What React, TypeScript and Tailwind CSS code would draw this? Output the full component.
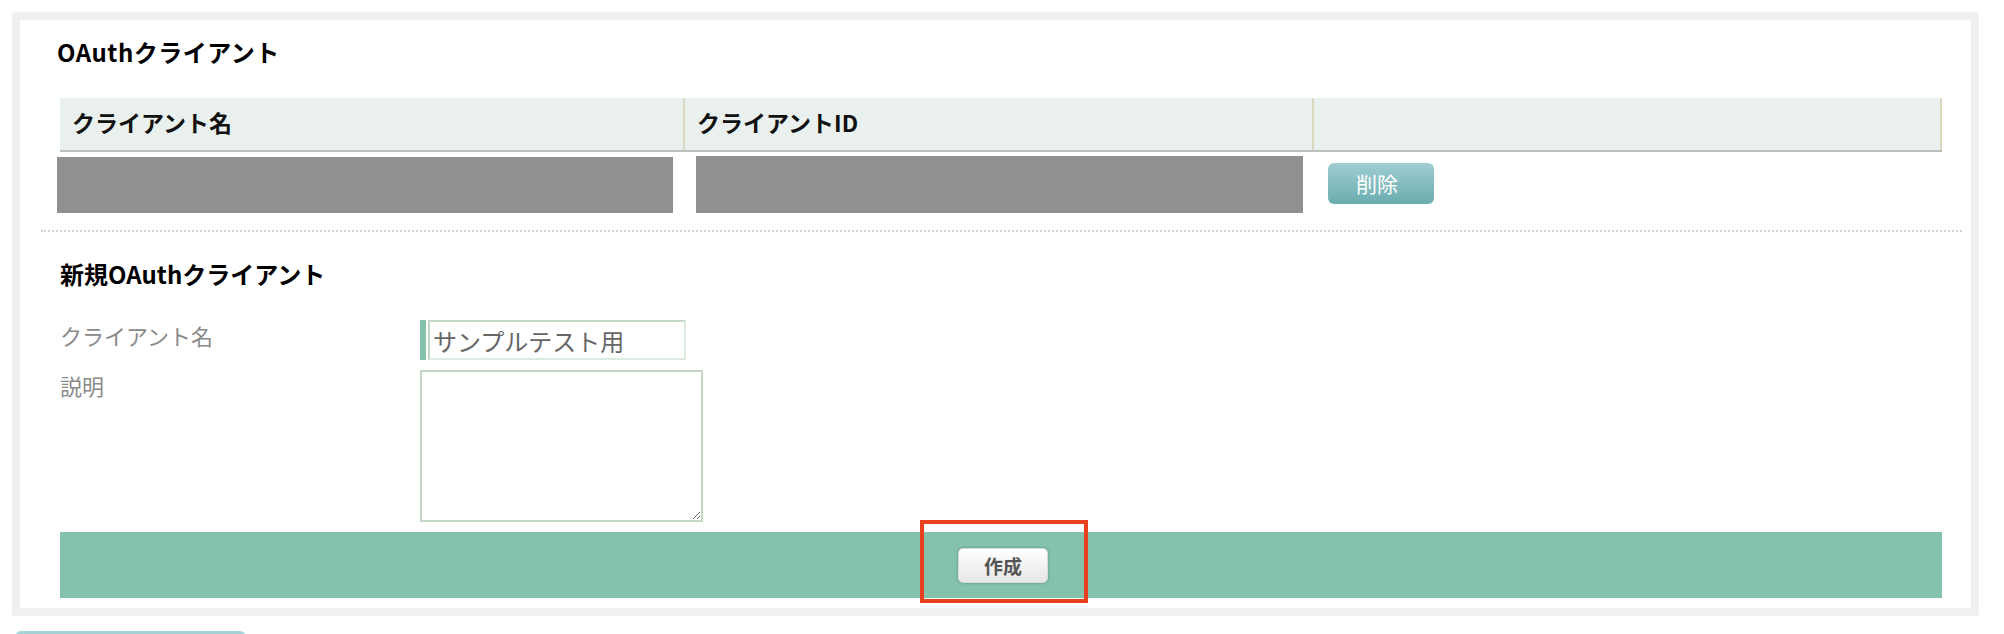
import React from "react";

const font = { fontFamily: '"Noto Sans CJK JP", "Noto Sans", sans-serif' };

const columns = ["クライアント名", "クライアントID", ""];

const ClientTable = () => {
  return (
    <div>
      <div className="flex h-[54px] bg-[#e9f0ed] border-b-2 border-[#bfbfbf]">
        <div className="w-[625px] border-r-2 border-[#d8d8bd] pl-[12px] pt-[13px] text-[23px] leading-[23px] font-bold text-[#111]">
          {columns[0]}
        </div>
        <div className="w-[629px] border-r-2 border-[#d8d8bd] pl-[12px] pt-[13px] text-[23px] leading-[23px] font-bold text-[#111]">
          {columns[1]}
        </div>
        <div className="flex-1 border-r-2 border-[#d8d8bd]">{columns[2]}</div>
      </div>
      <div className="flex h-[78px] items-start">
        <div className="-ml-[3px] mt-[5px] h-[56px] w-[616px] bg-[#919191]" />
        <div className="ml-[23px] mt-[4px] h-[57px] w-[607px] bg-[#919191]" />
        <button className="ml-[25px] mt-[11px] h-[41px] w-[106px] rounded-[6px] bg-gradient-to-b from-[#9fcdd2] to-[#69adb0] pr-[8px] text-[21px] leading-[21px] text-white">
          削除
        </button>
      </div>
    </div>
  );
};

const NewClientForm = () => {
  return (
    <div>
      <h2 className="mt-[30px] text-[24px] leading-[24px] font-bold text-black">新規OAuthクライアント</h2>
      <div className="mt-[34px] flex">
        <label className="mt-[4px] w-[360px] text-[22px] leading-[22px] text-[#8a8a8a]">クライアント名</label>
        <div className="flex h-[40px]">
          <div className="w-[6px] bg-[#84c2ab]" />
          <input
            defaultValue="サンプルテスト用"
            className="ml-[2px] h-[40px] w-[258px] border-2 border-t-[#c6d9c7] border-l-[#c6d9c7] border-r-[#dcebdf] border-b-[#dcebdf] pl-[3px] text-[24px] text-[#666] outline-none"
            style={font}
          />
        </div>
      </div>
      <div className="mt-[10px] flex">
        <label className="mt-[4px] w-[360px] text-[22px] leading-[22px] text-[#8a8a8a]">説明</label>
        <textarea className="h-[152px] w-[283px] border-2 border-[#c5d9c6] outline-none" />
      </div>
      <div className="mt-[10px] flex h-[66px] justify-center bg-[#84c2ac] pl-[4px] pt-[16px]">
        <button className="h-[35px] w-[90px] rounded-[5px] border border-[#d6dcd9] bg-gradient-to-b from-white to-[#e6e6e6] text-[19px] leading-[19px] font-bold text-[#555] shadow-[0_0_3px_rgba(60,110,90,0.6)]">
          作成
        </button>
      </div>
    </div>
  );
};

export default function App() {
  return (
    <div className="min-h-[634px] bg-white" style={font}>
      <div className="pl-[12px] pt-[12px]">
        <div className="relative w-[1967px] rounded-[3px] border-8 border-[#f0f0f0] bg-white pb-[10px] pl-[40px] pr-[29px] pt-[20px]">
          <h1 className="-ml-[3px] text-[24px] leading-[24px] tracking-[0.5px] font-bold text-black">OAuthクライアント</h1>
          <div className="mt-[34px]">
            <ClientTable />
          </div>
          <div className="-ml-[19px] -mr-[20px] border-t-2 border-dotted border-[#d2d2d2]" />
          <NewClientForm />
          <div className="absolute left-[900px] top-[500px] h-[83px] w-[168px] border-4 border-[#e8401f]" />
        </div>
      </div>
      <div className="ml-[15px] mt-[15px] h-[40px] w-[231px] rounded-[6px] bg-gradient-to-b from-[#a9d4d9] to-[#6aaeb0]" />
    </div>
  );
}
